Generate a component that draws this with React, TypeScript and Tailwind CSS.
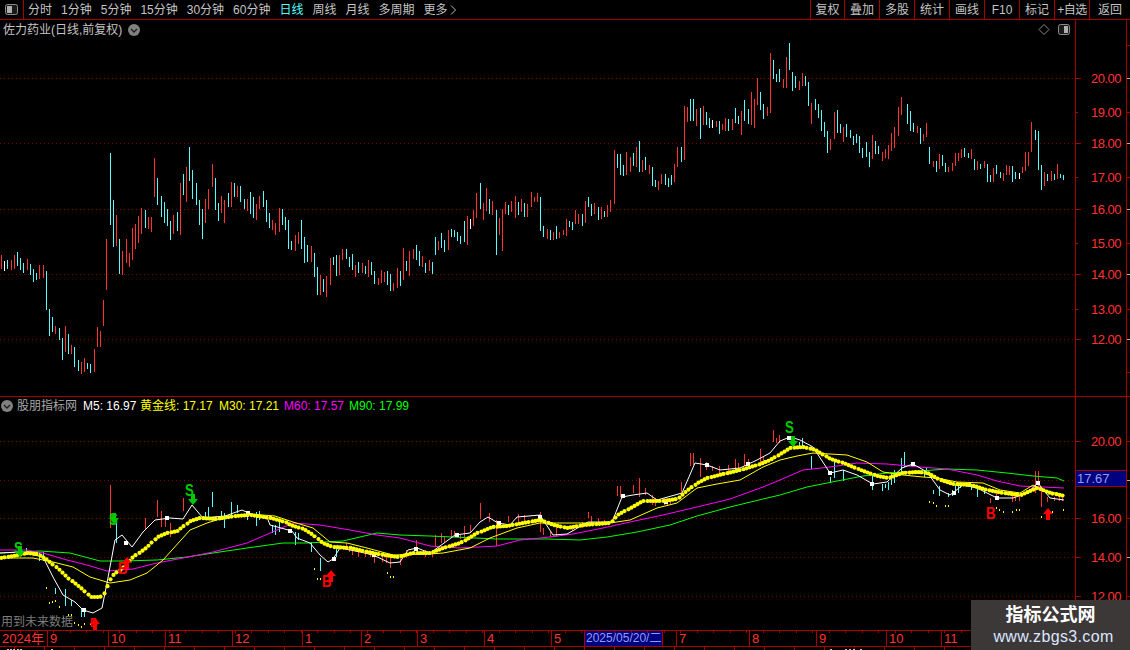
import React from "react";

const RED = "#ff3232";
const CYAN = "#54fcfc";
const FONT = "[font-family:'Liberation_Sans','Noto_Sans_CJK_SC',sans-serif]";

type Seg = { x: number; c: string; t: number; b: number };
function parse(s: string, ox: number, oy: number): Seg[] {
  return s.trim().split(/\s+/).map((e) => {
    const m = e.match(/^(\d+)([rcw])(-?\d+)-(\d+)$/)!;
    return {
      x: ox + Math.round((+m[1] - 1) / 3),
      c: m[2] === "r" ? RED : m[2] === "c" ? CYAN : "#ffffff",
      t: oy + +m[3] / 3,
      b: oy + +m[4] / 3,
    };
  });
}

const BARS: Seg[] = [
  ...parse("4r345-388 13w363-392 22c360-388 34r360-390 43r345-387 52c336-378 61c354-390 70c369-399 82r357-390 91c372-405 100c387-426 109c399-420 118r375-417 130r375-414 139c393-510 148c507-588 157c531-576 166r558-582 178c564-600 187c594-660 196r558-636 205c582-642 214r615-642 223c621-681 235c660-693 244r666-702 253r654-696 262c669-687 271c672-699 283r627-696 292r561-621 301r573-621 310r480-558 319r297-450 331c39-255 340c180-321 349r225-318 358c297-402 367r333-405 379r297-369 388r339-381 397r264-360 406r252-327 415r228-309 424r204-282 436c210-264 445r231-267 454r231-276 463r54-171 472c114-195 484c168-231 493c186-249 502c207-258 511c243-300 520r225-282 532c216-273 541r129-285 550c102-165 559r81-186 568c21-123 577c90-177 589c129-195 598c180-255 607c207-297 616r177-249 625r147-207 637r72-141 646c114-210 655c189-243 664r168-219 673r180-249 685c159-201 694r126-201 703c129-171 712r138-171 721c138-186 733c177-207 742r177-213 751c156-222 760c171-234 769r192-240 778r168-207 790c153-201 799c180-246 808c219-264 817r240-270 826r249-285 838r204-276", 0, 140),
  ...parse("7c237-285 16c261-300 25c270-357 34c333-360 46r315-363 55r306-342 64c270-357 73c321-399 82c345-396 94r348-396 103c369-441 112c411-495 121r435-495 130c447-486 139r438-501 151r384-465 160c381-405 169c375-438 178r375-435 187r357-390 199c357-387 208c381-411 217c372-420 226r405-441 235c396-429 247r399-429 256c408-432 265r390-441 274c396-435 283c423-462 295r444-465 304r420-459 313r426-456 322c423-465 331c432-483 340r459-483 352r414-474 361c423-468 370r354-450 379c393-423 388r363-438 400r357-387 409c345-390 418c363-408 427r378-411 436c399-429 448r390-423 457c396-432 466c321-375 475r333-360 484c309-354 493c330-366 505r300-360 514c297-321 523c300-321 532c306-333 541c318-342 553c273-336 562r258-345 571w267-297 580r240-288 589r189-264 601c159-237 610r219-270 619r174-243 628c207-252 637r213-255 649c240-375 658r264-315 667r237-363 676r216-252 685c225-255 694r213-246 706r198-264 715c216-255 724r207-246 733c219-261 742r222-261 754r186-231 763r201-216 772r189-216 781c201-303 790c288-321 802r297-327 811c300-330 820r306-330 829c288-327 838r306-324", 280, 130),
  ...parse("10r570-585 19r537-588 28c543-561 37c546-570 46r510-552 55r522-552 67c522-558 76r483-549 85c471-501 94c492-528 103r489-522 115c501-540 124r501-537 133c513-531 142r495-531 151r480-516 163r330-492 172c342-384 181c342-405 190c375-408 199r336-405 211r351-396 220c339-378 229r321-381 238c303-396 247r360-396 256c351-390 268r375-402 277c381-438 286c420-441 295r423-450 304r402-432 316c402-435 325c414-441 334c405-435 343r372-426 352r321-381 364c321-366 373r198-360 382r201-246 391c177-243 400c177-243 409r207-258 421c204-297 430r198-255 439c216-255 448c234-264 457w240-264 469r243-261 478c243-282 487r252-270 496r234-273 505c237-273 517r237-270 526c204-249 535c228-252 544r213-285 553c180-243 565c207-252 574r156-255 583r177-264 592r114-195 601c156-210 610c192-237 622r201-228 631r39-219 640c60-117 649c102-126 658c87-126 670r117-144 679r51-144 688c9-90 697c96-153 706c108-144 718r123-150 727r99-138 736c108-138 745c126-198 754r189-252 766c177-210 775c192-234 784c210-273 793c246-291 802c273-339 811r297-330 823r216-297 832c210-279", 560, 40),
  ...parse("31c192-219 40r201-246 49c192-231 61c210-234 70c228-255 79c222-249 88c228-279 97c264-294 109c246-291 118c276-321 127r225-297 136c243-282 145c258-282 157r276-303 166r267-294 175r255-297 184r219-273 193r201-264 205r141-228 214r111-165 233c132-192 241c153-213 250c189-216 262r198-219 271c204-252 280r222-243 289r189-231 298c261-312 310r303-321 319c303-336 328r282-327 337c285-318 346c309-336 355r321-336 367r309-333 376r279-318 385r279-303 394r267-294 403c264-291 415c279-294 424r267-297 433c297-330 442r303-330 451c312-327 463r303-324 472c312-366 481c345-366 490r324-366 499c315-342 511c336-354 520r339-363 529r315-345 538r318-345 547c318-366 556c336-357 568w339-357 577r321-339 586r276-333 595r276-318 604r186-276 616c210-240 625c213-330 634c315-390 643r336-378 652c342-363 664r333-363 673c342-360 682r312-357 691c342-354 700c345-360", 830, 60),
];

const STICKS: Seg[] = [
  ...parse("331r285-390 472r330-380 484r363-390 550r323-363 637c306-350 625c350-385 694c336-385 712c345-370 616c365-390 664c362-390 673c368-390 742c370-390 770c365-390 778c362-390 436r385-390", 0, 390),
  ...parse("331r0-25 349c10-68 436r0-28 484r0-20 496r0-20 511r10-50 673c0-25 769c0-18 817c15-40 826c15-45 838c0-35 886c35-75 895c40-60 934c65-95 961c115-153 1009c80-110 1039r70-85 1048r80-95 1057r80-105 1075r90-112 1096r95-110 1111r90-110 1123r105-130 1147r105-125 1159r110-130 1171r110-143 1201r110-135 1219r90-115 1249r60-90 1276r90-110 117c95-122 130c95-122 80c85-105 166c205-222 196c207-258 214c240-258 244c265-292 253c265-290", 0, 520),
  ...parse("8r420-440 16r375-410 34r370-400 43r380-400 64r360-380 73r362-380 91r375-388 103r348-385 121r345-365 151r280-328 178r310-335 199r330-408 235r318-335 265r312-335 283r316-340 331r305-365 340r355-375 361r365-382 379r355-380 427r345-362 457r336-355 475r306-325 484r318-340 505r325-345 523r330-345 562r228-258 571r228-260 610r225-250 628r205-260 646r235-255 667r255-285 676r265-288 703r265-285 712r265-288 721r268-285 754r215-245 781r128-168 790r128-165 811r145-200 829r155-180 847r168-183 868r168-190 895r165-185 916r148-175 925r160-175 943r132-168 955r148-165 991r118-165 1000r140-165 1030r60-95 1039r85-100 1048r75-100", 430, 410),
  ...parse("58c95-110 67c85-110 94c138-178 151c200-220 163c155-205 190c180-212 277c195-240 307c222-243 316c222-235 325c215-240 334c190-225 343c180-218 364c145-190 373c126-170 433c180-200 439c175-195 460c240-252 478c228-258 505c250-262 517c240-258 526c225-250 535c225-248 541c222-235 574c222-240 592c238-260 613c238-252 631r265-280 649r250-265 697r248-275 706r258-272 718r258-272 766r183-250 775r183-240 784r240-290 802r262-275 823r262-272 838r262-272 847r265-272", 780, 410),
];

const GOLD: number[][] = [[0,558],[13,556],[27,553],[37,554],[47,560],[58,569],[70,580],[82,589],[90,597],[100,597],[105,592],[108,582],[113,575],[123,567],[133,557],[147,547],[157,537],[167,533],[177,531],[190,521],[200,518],[215,519],[235,516],[250,515],[270,518],[285,522],[290,525],[303,529],[313,535],[322,543],[333,547],[350,548],[367,552],[383,555],[397,557],[413,553],[430,553],[443,548],[460,543],[477,533],[492,527],[507,526],[523,523],[540,520],[553,525],[567,528],[583,525],[610,523],[617,515],[630,508],[643,501],[663,501],[677,499],[685,492],[697,483],[707,478],[723,474],[740,470],[757,465],[770,460],[780,454],[790,448],[803,447],[815,450],[830,459],[843,463],[860,470],[877,476],[888,478],[902,473],[917,472],[927,473],[940,480],[953,484],[970,485],[987,490],[1003,493],[1020,495],[1037,488],[1050,493],[1064,496]];
const M5: number[][] = [[0,553],[20,552],[43,557],[53,577],[63,595],[75,602],[83,610],[93,613],[102,608],[107,583],[115,540],[122,535],[132,547],[143,532],[155,520],[170,518],[183,519],[192,505],[203,518],[213,517],[225,516],[242,510],[253,515],[267,517],[270,525],[292,531],[297,538],[310,543],[320,555],[328,562],[333,559],[340,548],[360,552],[373,555],[390,563],[400,562],[408,550],[417,548],[430,553],[440,546],[455,535],[470,533],[480,522],[488,517],[498,523],[510,525],[517,517],[540,515],[553,535],[567,534],[588,522],[612,522],[622,497],[633,495],[647,493],[657,500],[682,493],[695,463],[707,465],[720,470],[740,468],[757,460],[770,453],[780,441],[790,437],[800,440],[813,447],[830,473],[843,470],[857,475],[873,484],[887,482],[902,468],[913,464],[927,472],[940,490],[950,495],[963,485],[977,488],[997,498],[1013,498],[1027,493],[1038,483],[1050,498],[1064,500]];
const M30: number[][] = [[0,558],[33,558],[53,562],[73,567],[90,577],[110,583],[130,580],[147,573],[163,560],[190,530],[207,523],[223,518],[250,514],[275,516],[293,522],[313,528],[330,542],[347,543],[367,548],[393,555],[430,554],[443,553],[470,548],[490,538],[517,528],[540,523],[570,523],[610,523],[630,520],[657,508],[677,503],[697,488],[717,484],[740,480],[763,467],[780,460],[797,456],[813,453],[847,455],[867,462],[883,472],[903,475],[923,477],[937,478],[957,482],[983,483],[1000,490],[1020,493],[1033,485],[1043,490],[1064,495]];
const M60: number[][] = [[0,550],[27,550],[43,553],[67,560],[87,565],[107,571],[133,569],[157,563],[183,558],[213,552],[247,543],[277,530],[293,523],[320,525],[350,530],[377,535],[400,538],[430,546],[460,548],[497,546],[520,540],[550,537],[573,534],[603,528],[630,522],[663,515],[697,507],[730,499],[763,487],[780,480],[803,470],[830,467],[857,463],[887,464],[920,467],[947,469],[977,475],[997,481],[1020,486],[1043,487],[1064,488]];
const M90: number[][] = [[0,553],[40,551],[70,553],[100,561],[123,561],[157,560],[187,557],[213,553],[247,548],[283,543],[307,543],[343,541],[377,533],[400,535],[430,536],[497,539],[547,539],[580,540],[607,537],[637,532],[670,525],[697,516],[730,507],[763,499],[780,495],[807,487],[837,481],[863,476],[887,473],[920,471],[947,469],[977,470],[1007,473],[1033,476],[1057,478],[1064,481]];

const SQUARES: number[][] = [[84,610],[126,543],[334,559],[374,555],[416,549],[290,531],[167,518],[248,513],[457,535],[499,523],[540,517],[623,496],[666,502],[707,465],[748,464],[789,438],[830,473],[872,484],[913,464],[954,493],[997,498],[1038,483]];
const SPECKS: number[][] = [[46,587],[49,602],[52,601],[55,600],[59,606],[63,617],[68,614],[71,614],[74,622],[78,624],[81,626],[84,623],[90,623],[314,568],[317,578],[320,578],[387,572],[390,576],[393,576],[929,501],[933,502],[936,505],[945,505],[948,505],[996,507],[999,509],[1003,511],[1012,511],[1016,509],[1019,509],[1041,516],[1052,511],[1063,509]];

function interp(pts: number[][], x: number): number {
  for (let i = 1; i < pts.length; i++) {
    if (x <= pts[i][0]) {
      const [a, b] = [pts[i - 1], pts[i]];
      return a[1] + ((b[1] - a[1]) * (x - a[0])) / (b[0] - a[0]);
    }
  }
  return pts[pts.length - 1][1];
}
const goldDots: number[][] = [];
for (let x = 1.3; x < 1065; x += 3.195) goldDots.push([Math.round(x) + 0.5, interp(GOLD, x)]);
const line = (p: number[][]) => p.map((q) => q.join(",")).join(" ");

const GridLines = ({ ys }: { ys: number[] }) => (
  <>
    {ys.map((y) => (
      <line key={y} x1={0} x2={1075} y1={y + 0.5} y2={y + 0.5} stroke="#800000" strokeDasharray="1 3" />
    ))}
  </>
);

const Bars = ({ data }: { data: Seg[] }) => (
  <>
    {data.map((b, i) => (
      <rect key={i} x={b.x} y={b.t} width={1} height={b.b - b.t} fill={b.c} shapeRendering="crispEdges" />
    ))}
  </>
);

const Chev = ({ className }: { className: string }) => (
  <svg viewBox="0 0 12 12" className={className}>
    <circle cx="6" cy="6" r="6" fill="#808080" />
    <polyline points="3,5 6,8 9,5" fill="none" stroke="#1c1c1c" strokeWidth="1.3" />
  </svg>
);

const UpArrow = ({ x, y }: { x: number; y: number }) => (
  <polygon points={`${x},${y - 6} ${x + 5},${y} ${x + 2},${y} ${x + 2},${y + 6} ${x - 2},${y + 6} ${x - 2},${y} ${x - 5},${y}`} fill="#ff0000" />
);
const DownArrow = ({ x, y }: { x: number; y: number }) => (
  <polygon points={`${x},${y + 6} ${x + 5},${y} ${x + 2},${y} ${x + 2},${y - 5} ${x - 2},${y - 5} ${x - 2},${y} ${x - 5},${y}`} fill="#00c800" />
);
const Sig = ({ t, x, y, c, s = 17 }: { t: string; x: number; y: number; c: string; s?: number }) => (
  <text transform={`translate(${x},${y}) scale(0.78,1)`} fontSize={s} fontWeight="bold" fill={c}>{t}</text>
);

function Axis({ labels }: { labels: { t: string; y: number; big: boolean }[] }) {
  return (
    <div className="relative w-[51px] shrink-0 border-l border-[#a80000]">
      {labels.map((l) => (
        <React.Fragment key={l.t}>
          <div
            className={`absolute left-0 h-px bg-[#a80000] ${l.big ? "w-[5px]" : "w-[2px]"}`}
            style={{ top: l.y }}
          />
          <span className="absolute left-[15px] text-[13px] leading-none tracking-[-0.5px] text-[#ff3232]" style={{ top: l.y - 6 }}>
            {l.t}
          </span>
        </React.Fragment>
      ))}
    </div>
  );
}

const TOOLS = ["分时", "1分钟", "5分钟", "15分钟", "30分钟", "60分钟", "日线", "周线", "月线", "多周期"];
const RIGHT = ["复权", "叠加", "多股", "统计", "画线", "F10", "标记", "+自选", "返回"];

const mainLabels = [
  ["20.00", 58, 1], ["19.00", 92, 0], ["18.00", 123, 1], ["17.00", 157, 0], ["16.00", 189, 1],
  ["15.00", 223, 0], ["14.00", 254, 1], ["13.00", 289, 0], ["12.00", 319, 1],
].map(([t, y, b]) => ({ t: t as string, y: y as number, big: !!b }));
const lowLabels = [
  ["20.00", 44, 1], ["16.00", 121, 1], ["14.00", 160, 1], ["12.00", 199, 1],
].map(([t, y, b]) => ({ t: t as string, y: y as number, big: !!b }));

const DATES: [string, number][] = [["2024年", 48], ["9", 61], ["10", 57], ["11", 67], ["12", 70], ["1", 59], ["2", 56], ["3", 67], ["4", 67], ["5", 33]];
const DATES2: [string, number][] = [["", 14], ["7", 73], ["8", 67], ["9", 70], ["10", 55]];

const TOP_TICKS: number[] = [];
for (let x = 20; x < 1075; x += 16.5) TOP_TICKS.push(Math.round(x));
const LOW_TICKS: number[] = [];
for (let x = 14; x < 1075; x += 30) LOW_TICKS.push(Math.round(x));

export default function App() {
  return (
    <div className={`relative flex h-[650px] w-[1130px] flex-col overflow-hidden bg-black ${FONT} text-[12px] text-[#c4c4c4]`}>
      {/* toolbar */}
      <div className="flex h-5 shrink-0 items-center border-b border-[#a80000] leading-none">
        <div className="flex h-full w-6 shrink-0 items-center justify-center border-r border-[#a80000] pr-[1px]">
          <svg width="13" height="11" viewBox="0 0 13 11">
            <rect x="0.5" y="0.5" width="12" height="10" rx="2" fill="#1a1a1a" stroke="#8c8c8c" />
            <rect x="2" y="2" width="5" height="7" fill="#b0b0b0" />
          </svg>
        </div>
        <div className="flex items-center gap-[9px] pl-1">
          {TOOLS.map((t) => (
            <span key={t} className={t === "日线" ? "text-[#54fcfc]" : ""}>{t}</span>
          ))}
          <span className="flex items-center">
            更多
            <svg width="8" height="10" viewBox="0 0 8 10" className="ml-[1px]">
              <polyline points="2,0.5 6.5,5 2,9.5" fill="none" stroke="#b4b4b4" />
            </svg>
          </span>
        </div>
        <div className="flex-1" />
        <div className="flex h-full w-[320px] shrink-0">
          {RIGHT.map((t, i) => (
            <div key={t} className={`flex h-full items-center justify-center border-l border-[#a80000] ${i === 0 ? "w-[34px]" : i === 8 ? "w-[41px]" : "w-[35px]"}`}>
              <span className={t === "+自选" ? "whitespace-nowrap tracking-[-0.5px]" : ""}>{t}</span>
            </div>
          ))}
        </div>
      </div>

      {/* main chart */}
      <div className="flex h-[377px] shrink-0 border-b border-[#a80000]">
        <div className="relative w-[1075px] shrink-0">
          <svg className="absolute inset-0" width="1075" height="376" viewBox="0 20 1075 376">
            <GridLines ys={[78, 143, 209, 274, 339]} />
            <Bars data={BARS} />
          </svg>
          <div className="relative flex items-center pl-[3px] pt-[2px] leading-[16px]">
            <span className="w-[125px] whitespace-nowrap">佐力药业(日线,前复权)</span>
            <Chev className="h-3 w-3" />
            <div className="flex-1" />
            <svg width="34" height="14" viewBox="0 0 34 14" className="mr-[3px]">
              <polygon points="6,1.5 11,6.5 6,11.5 1,6.5" fill="none" stroke="#8a8a8a" />
              <rect x="20.5" y="1.5" width="11" height="10" rx="2" fill="#1a1a1a" stroke="#8c8c8c" />
              <rect x="26" y="3" width="4" height="7" fill="#b0b0b0" />
            </svg>
          </div>
        </div>
        <Axis labels={mainLabels} />
        <div className="w-1 shrink-0 border-l border-[#a80000]">
          <svg width="3" height="376" viewBox="0 0 3 376" className="block">
            {[25, 58, 92, 123, 157, 189, 223, 254, 289, 319, 352].map((y, i) => (
              <rect key={y} x="0" y={y} width="3" height="1" fill={i % 2 ? "#b0b0b0" : "#a80000"} />
            ))}
          </svg>
        </div>
      </div>

      {/* indicator panel */}
      <div className="flex h-[234px] shrink-0 border-b border-[#a80000]">
        <div className="relative w-[1075px] shrink-0">
          <svg className="absolute inset-0" width="1075" height="233" viewBox="0 397 1075 233">
            <GridLines ys={[441, 480, 518, 557, 596]} />
            <Bars data={STICKS} />
            {SPECKS.map((p, i) => (
              <rect key={i} x={p[0]} y={p[1]} width="1" height="2" fill="#ffff00" shapeRendering="crispEdges" />
            ))}
            <polyline points={line(M90)} fill="none" stroke="#00ff00" strokeWidth="1" />
            <polyline points={line(M60)} fill="none" stroke="#ff00ff" strokeWidth="1" />
            <polyline points={line(M30)} fill="none" stroke="#ffff00" strokeWidth="1" />
            <polyline points={line(M5)} fill="none" stroke="#ffffff" strokeWidth="1" />
            {SQUARES.map((p, i) => (
              <rect key={i} x={p[0] - 2} y={p[1] - 2} width="4" height="4" fill="#ffffff" shapeRendering="crispEdges" />
            ))}
            {goldDots.map((p, i) => (
              <circle key={i} cx={p[0]} cy={p[1]} r="2.1" fill="#ffff00" />
            ))}
            <Sig t="S" x={14} y={554} c="#00c800" />
            <Sig t="S" x={109} y={525} c="#00c800" />
            <Sig t="S" x={185} y={496} c="#00c800" />
            <Sig t="S" x={785} y={433} c="#00c800" />
            <DownArrow x={20} y={551} />
            <DownArrow x={114} y={518} />
            <DownArrow x={193} y={499} />
            <DownArrow x={793} y={441} />
            <Sig t="B" x={118} y={574} c="#ff0000" />
            <Sig t="B" x={322} y={587} c="#ff0000" />
            <Sig t="B" x={90} y={627} c="#ff0000" s={13} />
            <Sig t="B" x={986} y={519} c="#ff0000" />
            <UpArrow x={127} y={563} />
            <UpArrow x={331} y={576} />
            <UpArrow x={95} y={624} />
            <UpArrow x={1048} y={514} />
          </svg>
          <div className="relative flex items-center pt-[1px] leading-[16px]">
            <Chev className="ml-[1px] h-3 w-3" />
            <span className="ml-[4px] w-[66px] text-[#a8a8a8]">股朋指标网</span>
            <span className="w-[57px] text-[#ffffff]">M5: 16.97</span>
            <span className="w-[79px] text-[#ffff00]">黄金线: 17.17</span>
            <span className="w-[65px] text-[#ffff00]">M30: 17.21</span>
            <span className="w-[65px] text-[#ff00ff]">M60: 17.57</span>
            <span className="text-[#00ff00]">M90: 17.99</span>
          </div>
          <span className="absolute bottom-[1px] left-[1px] leading-[14px] text-[#7c7c7c]">用到未来数据</span>
        </div>
        <div className="relative flex">
          <Axis labels={lowLabels} />
          <div className="absolute left-[1px] top-[73px] h-[17px] w-[50px] border-y border-[#a80000] bg-[#000080] pl-[1px] text-[13px] leading-[15px] text-[#8f9ff0]">
            17.67
          </div>
        </div>
        <div className="w-1 shrink-0 border-l border-[#a80000]">
          <svg width="3" height="233" viewBox="0 0 3 233" className="block">
            {[44, 83, 121, 160, 199].map((y, i) => (
              <rect key={y} x="0" y={y} width="3" height="1" fill={i % 2 ? "#b0b0b0" : "#a80000"} />
            ))}
          </svg>
        </div>
      </div>

      {/* date axis */}
      <div className="relative flex h-4 shrink-0 border-b border-[#a80000] text-[13px] leading-[15px] text-[#ff3232]">
        {DATES.map(([t, w], i) => (
          <div key={i} className="shrink-0 border-r border-[#a80000] pl-[2px]" style={{ width: w }}>{t}</div>
        ))}
        <div className="w-[78px] shrink-0 overflow-hidden whitespace-nowrap border-r border-[#a80000] bg-[#000080] pl-[1px] text-[12px] text-[#8f9ff0]">2025/05/20/二</div>
        {DATES2.map(([t, w], i) => (
          <div key={i} className="shrink-0 border-r border-[#a80000] pl-[2px]" style={{ width: w }}>{t}</div>
        ))}
        <div className="flex-1 pl-[2px]">11</div>
        <svg className="pointer-events-none absolute left-0 top-0" width="1075" height="3" viewBox="0 0 1075 3">
          {TOP_TICKS.map((x) => (
            <rect key={x} x={x} y="0" width="1" height="2" fill="#a80000" />
          ))}
        </svg>
      </div>
      <div className="flex-1">
        <svg className="block" width="1130" height="4" viewBox="0 0 1130 4">
          {LOW_TICKS.map((x) => (
            <rect key={x} x={x} y="0" width="1" height="4" fill="#a80000" />
          ))}
          {[7, 10, 13, 17, 20, 51, 830, 845, 849, 853, 860].map((x) => (
            <rect key={x} x={x} y="2" width="2" height="2" fill="#c4c4c4" />
          ))}
        </svg>
      </div>

      {/* watermark */}
      <div className="absolute bottom-0 right-0 flex h-[50px] w-[159px] flex-col items-center justify-center bg-[#3c3838]">
        <span className="text-[18px] font-bold leading-[24px] text-white">指标公式网</span>
        <span className="ml-[6px] text-[16px] leading-[20px] tracking-[0.35px] text-[#dbe6ff]">www.zbgs3.com</span>
      </div>
    </div>
  );
}
